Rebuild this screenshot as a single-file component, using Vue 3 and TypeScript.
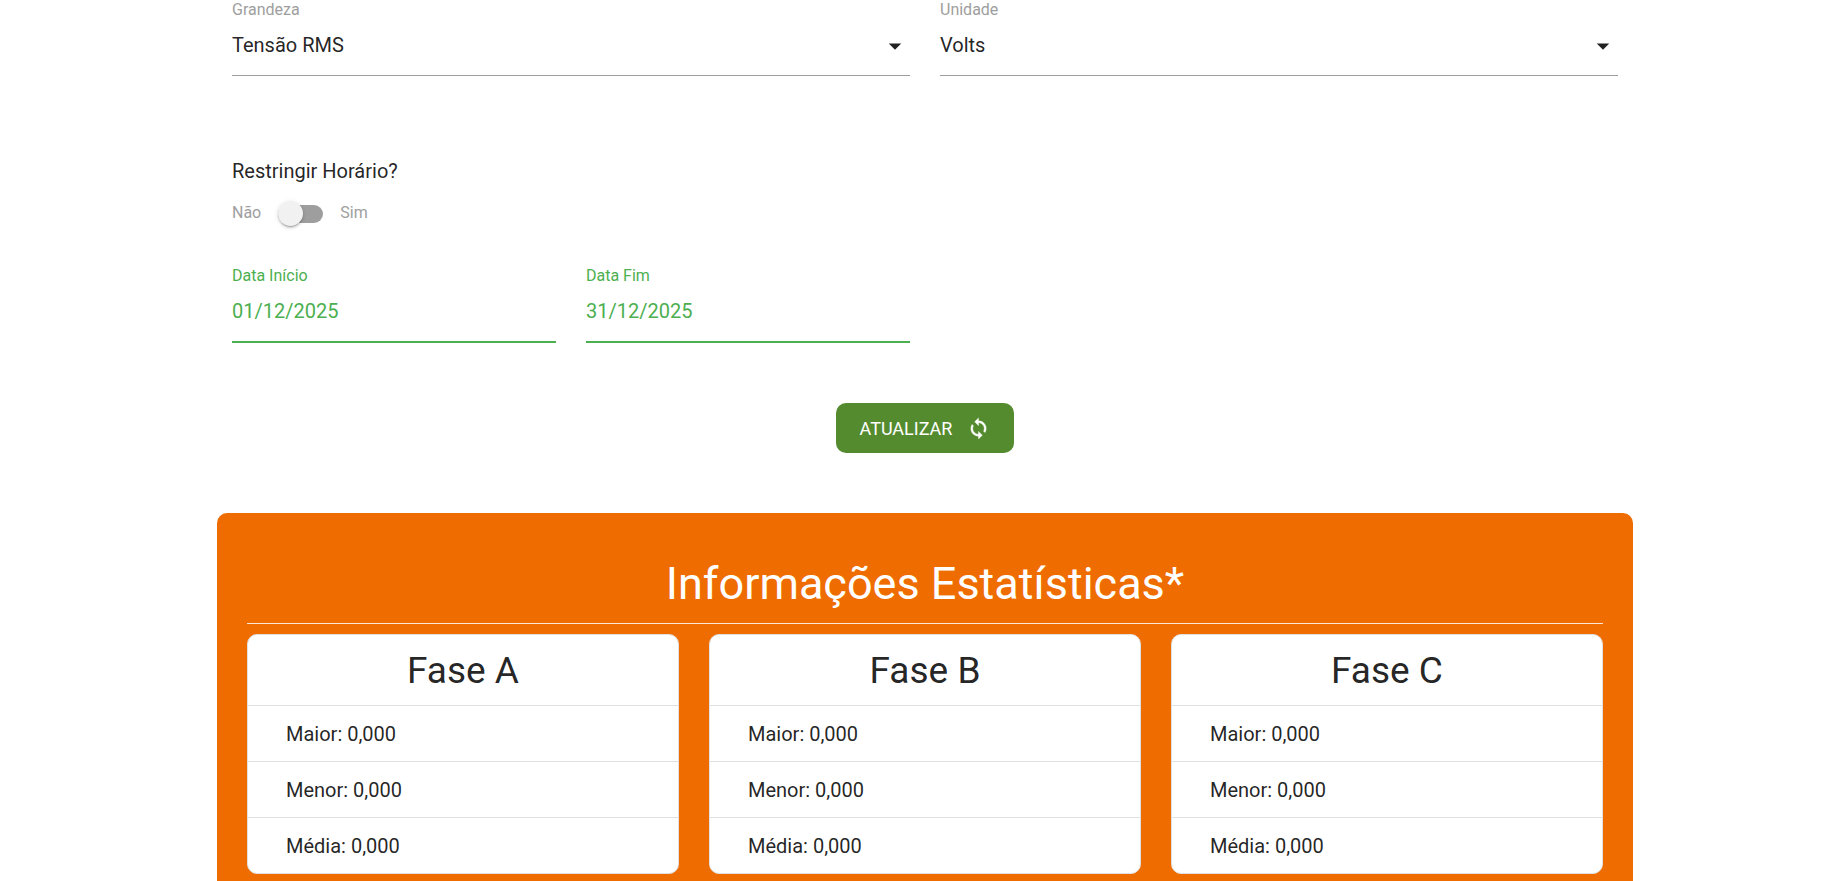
<script setup lang="ts">
import { ref } from 'vue'

interface Phase {
  name: string
  stats: { label: string; value: string }[]
}

const quantity = ref('Tensão RMS')
const unit = ref('Volts')
const restrictTime = ref(false)
const startDate = ref('01/12/2025')
const endDate = ref('31/12/2025')

const phases: Phase[] = ['A', 'B', 'C'].map((letter) => ({
  name: `Fase ${letter}`,
  stats: [
    { label: 'Maior', value: '0,000' },
    { label: 'Menor', value: '0,000' },
    { label: 'Média', value: '0,000' },
  ],
}))
</script>

<template>
  <main class="page">
    <div class="container">
      <form class="filters" @submit.prevent>
        <div class="row halves">
          <div class="field">
            <label for="quantity">Grandeza</label>
            <div class="select-wrap">
              <select id="quantity" v-model="quantity">
                <option>Tensão RMS</option>
              </select>
              <svg class="caret" viewBox="0 0 24 24" aria-hidden="true"><path d="M7 10l5 5 5-5z" /></svg>
            </div>
          </div>
          <div class="field">
            <label for="unit">Unidade</label>
            <div class="select-wrap">
              <select id="unit" v-model="unit">
                <option>Volts</option>
              </select>
              <svg class="caret" viewBox="0 0 24 24" aria-hidden="true"><path d="M7 10l5 5 5-5z" /></svg>
            </div>
          </div>
        </div>

        <div class="restrict">
          <span id="restrict-title" class="question">Restringir Horário?</span>
          <label class="switch">
            <span>Não</span>
            <input v-model="restrictTime" type="checkbox" role="switch" aria-labelledby="restrict-title" />
            <span>Sim</span>
          </label>
        </div>

        <div class="row quarters">
          <div class="field active">
            <label for="start">Data Início</label>
            <input id="start" v-model="startDate" type="text" />
          </div>
          <div class="field active">
            <label for="end">Data Fim</label>
            <input id="end" v-model="endDate" type="text" />
          </div>
        </div>

        <button class="update" type="submit">
          <span>ATUALIZAR</span>
          <svg viewBox="0 0 24 24" aria-hidden="true">
            <path
              d="M12 4V1L8 5l4 4V6c3.31 0 6 2.69 6 6 0 1.01-.25 1.97-.7 2.8l1.46 1.46C19.54 15.03 20 13.57 20 12c0-4.42-3.58-8-8-8zm0 14c-3.31 0-6-2.69-6-6 0-1.01.25-1.97.7-2.8L5.24 7.74C4.46 8.97 4 10.43 4 12c0 4.42 3.58 8 8 8v3l4-4-4-4v3z"
            />
          </svg>
        </button>
      </form>

      <section class="panel">
        <h2>Informações Estatísticas*</h2>
        <div class="cards">
          <article v-for="phase in phases" :key="phase.name" class="card">
            <h3>{{ phase.name }}</h3>
            <ul>
              <li v-for="stat in phase.stats" :key="stat.label">{{ stat.label }}: {{ stat.value }}</li>
            </ul>
          </article>
        </div>
      </section>
    </div>
  </main>
</template>

<style>
body {
  margin: 0;
  background: #fff;
}
</style>

<style scoped>
*,
*::before {
  box-sizing: border-box;
}

.page {
  display: flex;
  min-height: 100vh;
  padding-left: 17px;
  font-family: Roboto, 'Liberation Sans', sans-serif;
  font-size: 20px;
  color: rgba(0, 0, 0, 0.87);
}

.container {
  display: flex;
  flex-direction: column;
  width: 100%;
  max-width: 1416px;
  margin: 0 auto;
}

.filters {
  display: flex;
  flex-direction: column;
  padding: 0 15px;
}

.row {
  display: grid;
  gap: 30px;
}

.halves {
  grid-template-columns: repeat(2, 1fr);
}

.quarters {
  grid-template-columns: repeat(4, 1fr);
}

.field {
  display: flex;
  flex-direction: column;
  min-width: 0;
}

.field label {
  font-size: 16px;
  line-height: 20px;
  color: #9e9e9e;
}

.select-wrap {
  display: grid;
  align-items: center;
}

.select-wrap > * {
  grid-area: 1 / 1;
}

.field select,
.field input {
  width: 100%;
  height: 56px;
  margin: 0;
  padding: 0 0 5px;
  border: 0;
  border-bottom: 1px solid #9e9e9e;
  border-radius: 0;
  outline: 0;
  background: transparent;
  font: inherit;
  color: inherit;
  appearance: none;
}

.caret {
  justify-self: end;
  width: 30px;
  height: 30px;
  margin-bottom: 4px;
  fill: rgba(0, 0, 0, 0.87);
  pointer-events: none;
}

.field.active label {
  color: #4caf50;
}

.field.active input {
  height: 57px;
  border-bottom: 2px solid #4caf50;
  color: #4caf50;
}

.restrict {
  display: flex;
  flex-direction: column;
  align-items: flex-start;
  gap: 15px;
  margin: 80px 0 40px;
}

.question {
  line-height: 30px;
}

.switch {
  display: flex;
  align-items: center;
  gap: 17px;
  height: 25px;
  font-size: 16px;
  line-height: 20px;
  color: #9e9e9e;
  cursor: pointer;
}

.switch span {
  padding-bottom: 2px;
}

.switch input {
  display: flex;
  align-items: center;
  width: 45px;
  height: 18px;
  margin: 0;
  border-radius: 9px;
  background: rgba(0, 0, 0, 0.38);
  appearance: none;
  cursor: pointer;
}

.switch input::before {
  content: '';
  width: 25px;
  height: 25px;
  border-radius: 50%;
  background: #f1f1f1;
  box-shadow:
    0 3px 1px -2px rgba(0, 0, 0, 0.2),
    0 2px 2px 0 rgba(0, 0, 0, 0.14),
    0 1px 5px 0 rgba(0, 0, 0, 0.12);
}

.switch input:checked {
  justify-content: flex-end;
  background: #84c7c1;
}

.update {
  display: flex;
  align-items: center;
  align-self: center;
  gap: 15px;
  height: 50px;
  margin: 60px 0;
  padding: 0 24px;
  border: 0;
  border-radius: 10px;
  background: #558b2f;
  font-family: inherit;
  font-size: 18px;
  color: #fff;
  cursor: pointer;
}

.update svg {
  width: 23px;
  height: 23px;
  fill: currentColor;
  stroke: currentColor;
  stroke-width: 0.4;
}

.panel {
  flex: 1;
  padding: 46px 30px 7px;
  border-radius: 10px 10px 0 0;
  background: #ef6c00;
}

h2,
h3 {
  margin: 0;
  font-weight: 400;
  text-align: center;
}

h2 {
  padding-bottom: 14px;
  border-bottom: 1px solid #fde9d9;
  font-size: 45px;
  line-height: 50px;
  color: #fff;
}

.cards {
  display: grid;
  grid-template-columns: repeat(3, 1fr);
  gap: 30px;
  margin-top: 10px;
}

.card {
  overflow: hidden;
  border: 1px solid #e0e0e0;
  border-radius: 10px;
  background: #fff;
}

h3 {
  padding-top: 2px;
  font-size: 37px;
  line-height: 68px;
}

ul {
  margin: 0;
  padding: 0;
  list-style: none;
}

li {
  padding: 2px 38px 0;
  border-top: 1px solid #e0e0e0;
  line-height: 53px;
}
</style>
